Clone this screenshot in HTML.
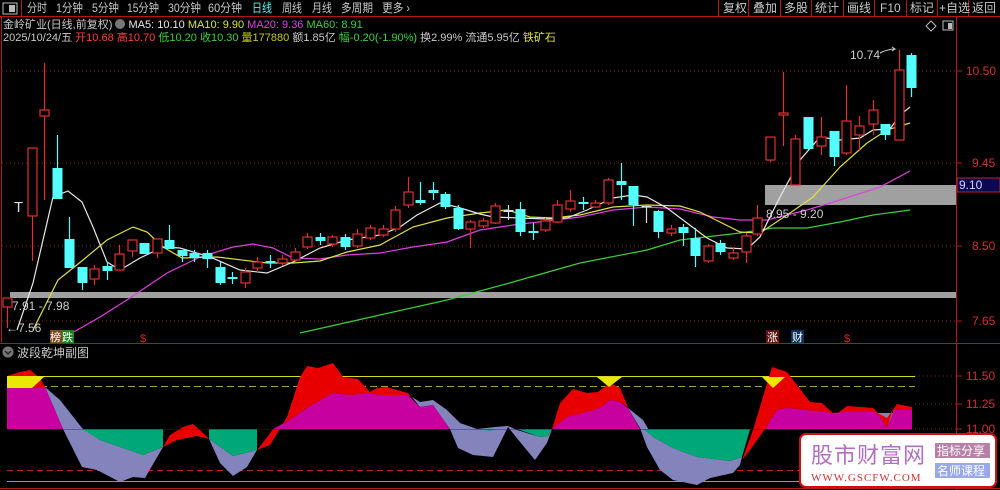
<!DOCTYPE html>
<html><head><meta charset="utf-8">
<style>
html,body{margin:0;padding:0;background:#000;}
body{width:1000px;height:490px;overflow:hidden;position:relative;font-family:"Liberation Sans","Noto Sans CJK SC",sans-serif;}
.t{position:absolute;white-space:nowrap;font-size:11px;line-height:13px;}
</style></head><body>
<svg width="1000" height="490" style="position:absolute;left:0;top:0" font-family="Liberation Sans, Noto Sans CJK SC, sans-serif">
<!-- top bar -->
<line x1="0" y1="16.5" x2="1000" y2="16.5" stroke="#b01818"/>
<rect x="3" y="3" width="14" height="11" fill="none" stroke="#bbb"/><rect x="9" y="5" width="6" height="7" fill="#bbb"/>
<line x1="21.5" y1="0" x2="21.5" y2="16" stroke="#b01818"/>
<g stroke="#b01818">
<line x1="718.5" y1="0" x2="718.5" y2="16"/><line x1="748.5" y1="0" x2="748.5" y2="16"/><line x1="780.5" y1="0" x2="780.5" y2="16"/><line x1="811.5" y1="0" x2="811.5" y2="16"/><line x1="843.5" y1="0" x2="843.5" y2="16"/><line x1="874.5" y1="0" x2="874.5" y2="16"/><line x1="906.5" y1="0" x2="906.5" y2="16"/><line x1="937.5" y1="0" x2="937.5" y2="16"/><line x1="968.5" y1="0" x2="968.5" y2="16"/>
</g>
<g font-size="12" fill="#c8c8c8" lengthAdjust="spacingAndGlyphs">
<text x="27" y="12" textLength="20" lengthAdjust="spacingAndGlyphs">分时</text>
<text x="56" y="12" textLength="27" lengthAdjust="spacingAndGlyphs">1分钟</text>
<text x="92" y="12" textLength="27" lengthAdjust="spacingAndGlyphs">5分钟</text>
<text x="127" y="12" textLength="32" lengthAdjust="spacingAndGlyphs">15分钟</text>
<text x="168" y="12" textLength="33" lengthAdjust="spacingAndGlyphs">30分钟</text>
<text x="208" y="12" textLength="34" lengthAdjust="spacingAndGlyphs">60分钟</text>
<text x="252" y="12" fill="#5ef0f0" textLength="20" lengthAdjust="spacingAndGlyphs">日线</text>
<text x="282" y="12" textLength="20" lengthAdjust="spacingAndGlyphs">周线</text>
<text x="312" y="12" textLength="20" lengthAdjust="spacingAndGlyphs">月线</text>
<text x="341" y="12" textLength="32" lengthAdjust="spacingAndGlyphs">多周期</text>
<text x="382" y="12" textLength="28" lengthAdjust="spacingAndGlyphs">更多 ›</text>
<text x="723" y="12">复权</text><text x="753" y="12">叠加</text><text x="784" y="12">多股</text><text x="815" y="12">统计</text><text x="847" y="12">画线</text><text x="880" y="12">F10</text><text x="910" y="12">标记</text><text x="939" y="12">+自选</text><text x="972" y="12">返回</text>
</g>
<!-- frame -->
<line x1="956.5" y1="16" x2="956.5" y2="490" stroke="#b01818"/>
<line x1="0" y1="343.5" x2="1000" y2="343.5" stroke="#b01818"/>
<line x1="0" y1="488.5" x2="1000" y2="488.5" stroke="#b01818"/>
<line x1="1.5" y1="16" x2="1.5" y2="343" stroke="#b01818"/>
<path d="M931 21 l5 5 -5 5 -5 -5z" fill="none" stroke="#bbb"/>
<rect x="943" y="21" width="10" height="9" fill="none" stroke="#bbb"/><rect x="948" y="23" width="4" height="6" fill="#bbb"/>
<!-- grid -->
<g stroke="#8a1a1a" stroke-dasharray="1,3">
<line x1="2" y1="71" x2="956" y2="71"/><line x1="2" y1="163" x2="956" y2="163"/><line x1="2" y1="246" x2="956" y2="246"/><line x1="2" y1="321" x2="956" y2="321"/>
<line x1="915" y1="376" x2="956" y2="376"/><line x1="915" y1="404" x2="956" y2="404"/><line x1="915" y1="429" x2="956" y2="429"/>
</g>
<g stroke="#b01818"><line x1="956" y1="71" x2="962" y2="71"/><line x1="956" y1="163" x2="962" y2="163"/><line x1="956" y1="246" x2="962" y2="246"/><line x1="956" y1="321" x2="962" y2="321"/><line x1="956" y1="376" x2="962" y2="376"/><line x1="956" y1="404" x2="962" y2="404"/><line x1="956" y1="429" x2="962" y2="429"/></g>
<g font-size="12" fill="#d03030"><text x="966" y="75">10.50</text><text x="972" y="167">9.45</text><text x="972" y="250">8.50</text><text x="972" y="325">7.65</text><text x="966" y="380">11.50</text><text x="966" y="408">11.25</text><text x="966" y="433">11.00</text></g>
<!-- gray zones -->
<rect x="10" y="292" width="946" height="6" fill="#a0a0a0"/>
<rect x="765" y="185" width="191" height="20" fill="#a0a0a0"/>
<rect x="957" y="178" width="43" height="14" fill="#0a0a50" stroke="#c02020"/>
<text x="959" y="189" font-size="12" fill="#d0d0ff">9.10</text>
<!-- MA lines -->
<g fill="none" stroke-width="1.2">
<polyline stroke="#3ad03a" points="300,333 380,315 447,300 513,282 580,263 647,250 680,240 740,233 773,228 807,228 840,222 873,215 910,210"/>
<polyline stroke="#e040e0" points="72,333 100,317 133,296 167,273 200,257 233,247 253,244 273,248 293,258 320,259 347,255 380,253 413,247 447,242 480,230 513,225 547,221 580,217 613,210 647,207 680,209 713,217 740,220 767,220 807,210 840,200 880,187 910,171"/>
<polyline stroke="#e0e040" points="33,330 58,280 83,260 107,240 133,227 147,232 163,247 182,258 217,257 267,263 293,263 320,261 347,252 380,245 413,227 447,218 480,213 507,210 530,217 553,218 580,215 613,207 647,205 680,206 700,212 740,232 760,233 790,213 813,197 840,167 867,143 887,130 910,123"/>
<polyline stroke="#e8e8e8" points="17,330 33,283 53,197 68,191 82,202 93,227 107,262 120,270 140,258 163,247 180,248 210,257 240,270 267,273 293,262 320,248 347,240 380,235 400,227 417,215 440,203 457,207 480,214 493,217 520,218 547,219 567,218 587,210 613,198 633,195 647,197 667,208 687,223 707,238 727,248 747,249 760,237 780,197 800,160 820,137 840,140 860,138 873,130 890,129 900,115 910,107"/>
</g>
<!-- candles -->
<g id="cd" stroke-width="1.2"></g>
<!-- texts in chart -->
<text x="14" y="212" font-size="15" fill="#ddd">T</text>
<text x="12" y="310" font-size="12" fill="#ccc">7.91 - 7.98</text>
<text x="6" y="332" font-size="12" fill="#ccc">←7.56</text>
<text x="850" y="59" font-size="12" fill="#ccc">10.74</text>
<path d="M880 53 q8 -4 15 -4 l-3 -2 m3 2 l-3 2" stroke="#ccc" fill="none"/>
<text x="766" y="218" font-size="12" fill="#ccc">8.95 - 9.20</text>
<rect x="50" y="330" width="12" height="13" fill="#7a4a20"/><text x="50" y="341" font-size="11" fill="#fff">榜</text>
<rect x="62" y="330" width="12" height="13" fill="#208020"/><text x="62" y="341" font-size="11" fill="#fff">跌</text>
<text x="140" y="342" font-size="11" fill="#e02020">$</text>
<rect x="766" y="330" width="13" height="13" fill="#601010"/><text x="767" y="341" font-size="11" fill="#fff">涨</text>
<rect x="791" y="330" width="13" height="13" fill="#103060"/><text x="792" y="341" font-size="11" fill="#fff">财</text>
<text x="844" y="342" font-size="11" fill="#e02020">$</text>
<!-- sub chart -->
<circle cx="8" cy="352" r="5.5" fill="#777"/><path d="M5 351 l3 3 3 -3" stroke="#222" fill="none" stroke-width="1.4"/>
<text x="17" y="357" font-size="12" fill="#c8c8c8">波段乾坤副图</text>
<line x1="7" y1="376.5" x2="915" y2="376.5" stroke="#d8d820"/>
<line x1="7" y1="386.5" x2="915" y2="386.5" stroke="#a0a040" stroke-dasharray="7,4"/>
<line x1="7" y1="470.5" x2="915" y2="470.5" stroke="#c02020" stroke-dasharray="6,4"/>
<line x1="7" y1="481.5" x2="915" y2="481.5" stroke="#40b8c8"/>
<g fill="#8484bc">
<polygon points="45,387 60,400 82,428 100,440 143,455 163,447 145,478 133,477 120,482 97,470 82,467 63,429"/>
<polygon points="209,439 233,456 257,450 247,467 233,476 220,463"/>
<polygon points="412,397 420,402 433,400 447,410 460,423 477,429 495,427 508,426 517,430 540,437 548,436 552,429 547,443 535,460 520,442 508,427 493,457 473,455 458,448 450,429 433,405 420,407"/>
<polygon points="628,408 643,420 653,437 673,448 697,457 730,461 742,457 740,465 733,473 710,478 697,485 673,480 660,470 647,447 640,428"/>
<polygon points="877,413 887,428 893,413"/>
</g>
<g fill="#00a878">
<polygon points="82,429 163,429 163,447 143,455 100,440"/>
<polygon points="209,429 257,429 257,450 233,456 209,439"/>
<polygon points="477,429 495,429 490,431"/>
<polygon points="517,429 552,429 548,436 540,437"/>
<polygon points="643,429 750,429 742,457 730,461 697,457 673,448 653,437"/>
</g>
<g fill="#e80000">
<polygon points="7,388 7,376 20,372 30,370 40,378 45,387"/>
<polygon points="163,447 170,435 183,427 193,424 200,430 209,439 197,436 177,440"/>
<polygon points="257,450 270,445 287,417 300,377 307,366 318,368 333,363 343,377 358,379 370,392 377,388 387,387 393,389 408,393 412,397 408,395 380,395 367,393 350,395 333,393 307,408 290,420 273,429 265,440"/>
<polygon points="552,429 560,403 573,389 587,393 598,392 610,383 620,388 628,407 620,402 610,400 600,408 587,412 567,417"/>
<polygon points="742,460 753,430 772,367 787,372 810,402 822,403 835,415 847,406 860,407 873,408 878,413 887,418 897,404 912,407 912,410 893,410 887,428 877,413 847,412 833,413 807,410 787,408 777,410 765,429 750,450"/>
</g>
<g fill="#c800a0">
<polygon points="7,388 45,387 63,429 7,429"/>
<polygon points="273,429 290,420 307,408 333,393 350,395 367,393 380,395 408,395 420,407 433,405 450,429"/>
<polygon points="552,429 567,417 587,412 600,408 610,400 620,402 628,408 640,429"/>
<polygon points="765,429 777,410 787,408 807,410 833,413 847,412 873,412 877,413 887,428 893,413 893,410 912,410 912,429"/>
</g>
<line x1="7" y1="429.5" x2="912" y2="429.5" stroke="#1a1a80" stroke-opacity="0.4"/>
<g fill="#e8e800">
<polygon points="7,376 45,376 32,388 7,388"/>
<polygon points="597,377 622,377 609,387"/>
<polygon points="762,377 785,377 773,388"/>
</g>
<!-- watermark -->
<rect x="800" y="434" width="196" height="53" rx="6" fill="#fff" stroke="#d01010" stroke-width="2"/>
<text x="811" y="463" font-size="22" fill="#b070c0" font-family="Noto Sans CJK SC, sans-serif" letter-spacing="1">股市财富网</text>
<text x="811" y="481" font-size="11" fill="#d03030" font-family="Liberation Serif, serif" letter-spacing="1">WWW.GSCFW.COM</text>
<rect x="935" y="443" width="55" height="15" fill="#b880a8"/><text x="937" y="455" font-size="12" fill="#fff">指标分享</text>
<rect x="935" y="463" width="55" height="15" fill="#98a8e8"/><text x="937" y="475" font-size="12" fill="#fff">名师课程</text>
</svg>
<div class="t" style="left:3px;top:19px;color:#c8c8c8">金岭矿业(日线,前复权) <span style="display:inline-block;width:10px;height:10px;border-radius:5px;background:#777;vertical-align:-1px"></span> <span style="color:#e8e8e8">MA5: 10.10</span> <span style="color:#e0e040">MA10: 9.90</span> <span style="color:#e040e0">MA20: 9.36</span> <span style="color:#3ad03a">MA60: 8.91</span></div>
<div class="t" style="left:3px;top:32px;color:#c8c8c8">2025/10/24/五 <span style="color:#ff4040">开10.68</span> <span style="color:#ff4040">高10.70</span> <span style="color:#3ad03a">低10.20</span> <span style="color:#3ad03a">收10.30</span> <span style="color:#c8c820">量177880</span> 额1.85亿 <span style="color:#3ad03a">幅-0.20(-1.90%)</span> 换2.99% 流通5.95亿 <span style="color:#e0e040">铁矿石</span></div>
<script>
var d=[[7,298,307,298,328,'r'],[32,148,216,148,261,'r'],[44,110,116,63,200,'r'],[57,168,199,135,199,'c'],[69,239,268,217,268,'c'],[82,267,283,267,290,'c'],[94,269,279,265,285,'r'],[107,266,271,262,280,'c'],[119,254,270,245,270,'r'],[132,240,251,240,257,'r'],[144,243,254,243,254,'c'],[157,239,253,239,258,'r'],[169,240,249,225,249,'c'],[182,250,256,250,262,'c'],[194,253,258,250,262,'c'],[207,253,259,250,268,'c'],[220,267,283,262,285,'c'],[232,277,279,272,284,'c'],[245,272,283,268,288,'r'],[257,262,268,257,272,'r'],[270,261,263,255,268,'c'],[282,259,263,255,266,'r'],[295,252,260,248,262,'r'],[307,237,247,233,249,'r'],[320,237,241,233,245,'c'],[332,237,244,235,247,'r'],[345,237,247,234,250,'c'],[357,234,246,229,248,'r'],[370,228,238,225,240,'r'],[383,229,235,225,237,'r'],[395,210,229,206,232,'r'],[408,192,205,177,208,'r'],[420,200,203,182,205,'c'],[433,190,193,182,200,'c'],[445,194,207,192,209,'c'],[458,208,229,205,230,'c'],[470,222,229,220,248,'r'],[483,221,226,218,228,'r'],[495,206,223,203,224,'r'],[508,210,212,205,220,'w'],[520,209,232,202,236,'c'],[533,231,233,223,240,'c'],[545,221,230,218,232,'r'],[557,205,222,200,223,'r'],[570,201,209,190,212,'r'],[583,202,204,197,210,'c'],[595,203,207,200,208,'r'],[608,180,203,178,205,'r'],[621,181,185,163,200,'c'],[633,186,205,186,226,'c'],[646,206,207,206,223,'w'],[658,211,232,210,238,'c'],[671,229,233,225,236,'r'],[683,227,233,224,246,'c'],[695,238,256,228,267,'c'],[708,246,261,244,263,'r'],[720,243,252,240,255,'c'],[733,253,258,247,260,'r'],[746,236,252,233,263,'r'],[757,218,234,205,236,'r'],[770,137,160,137,162,'r'],[783,113,115,72,146,'r'],[795,139,185,135,185,'r'],[808,117,149,117,150,'c'],[821,137,146,117,155,'r'],[834,131,157,131,166,'c'],[846,121,153,85,155,'r'],[859,126,135,116,150,'r'],[873,110,124,100,135,'r'],[885,124,135,124,140,'c'],[899,70,140,50,140,'r'],[911,55,88,53,97,'c']];
var g=document.getElementById('cd'),s='';
d.forEach(function(c){var col=c[5]=='r'?'#e03030':(c[5]=='c'?'#54ffff':'#dddddd');var x=c[0]+0.5;
s+='<line x1="'+x+'" x2="'+x+'" y1="'+c[3]+'" y2="'+c[4]+'" stroke="'+col+'"/>';
var h=Math.max(c[2]-c[1],1.5);
if(c[5]=='r')s+='<rect x="'+(c[0]-4)+'" y="'+c[1]+'" width="9" height="'+h+'" fill="#000" stroke="'+col+'"/>';
else s+='<rect x="'+(c[0]-4.5)+'" y="'+c[1]+'" width="10" height="'+h+'" fill="'+col+'"/>';});
g.innerHTML=s;
</script>
</body></html>
